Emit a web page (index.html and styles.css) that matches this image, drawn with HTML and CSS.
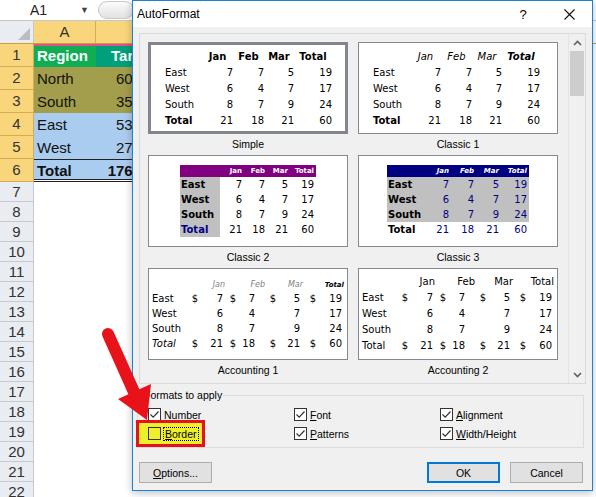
FILE: index.html
```html
<!DOCTYPE html>
<html>
<head>
    <meta charset="UTF-8">
    <title>AutoFormat</title>
    <link rel="stylesheet" href="styles.css">
</head>
<body>
    <!-- worksheet behind the dialog -->
    <div class="sheet">
        <div class="formula-bar">
            <div class="name-box">A1</div>
            <span class="name-drop">&#9660;</span>
            <span class="fx-btn"></span>
        </div>

        <div class="col-heads">
            <div class="corner">
                <svg width="12" height="12" viewBox="0 0 12 12"><polygon points="12,0 12,12 0,12" fill="#b9bec6"/></svg>
            </div>
            <div class="col-head col-a">A</div>
            <div class="col-head col-b">B</div>
        </div>

        <div class="row sel"><div class="rh">1</div><div class="cell a title-a">Region</div><div class="cell b title-b">Target</div></div>
        <div class="row sel olive"><div class="rh">2</div><div class="cell a">North</div><div class="cell b">605</div></div>
        <div class="row sel olive"><div class="rh">3</div><div class="cell a">South</div><div class="cell b">355</div></div>
        <div class="row sel sky"><div class="rh">4</div><div class="cell a">East</div><div class="cell b">530</div></div>
        <div class="row sel sky"><div class="rh">5</div><div class="cell a">West</div><div class="cell b">270</div></div>
        <div class="row sel sky total"><div class="rh">6</div><div class="cell a">Total</div><div class="cell b">1760</div></div>
        <div class="row plain"><div class="rh">7</div></div>
        <div class="row plain"><div class="rh">8</div></div>
        <div class="row plain"><div class="rh">9</div></div>
        <div class="row plain"><div class="rh">10</div></div>
        <div class="row plain"><div class="rh">11</div></div>
        <div class="row plain"><div class="rh">12</div></div>
        <div class="row plain"><div class="rh">13</div></div>
        <div class="row plain"><div class="rh">14</div></div>
        <div class="row plain"><div class="rh">15</div></div>
        <div class="row plain"><div class="rh">16</div></div>
        <div class="row plain"><div class="rh">17</div></div>
        <div class="row plain"><div class="rh">18</div></div>
        <div class="row plain"><div class="rh">19</div></div>
        <div class="row plain"><div class="rh">20</div></div>
        <div class="row plain"><div class="rh">21</div></div>
        <div class="row plain"><div class="rh">22</div></div>
    </div>

    <!-- AutoFormat dialog window -->
    <div class="dialog">
        <div class="titlebar">
            <span class="title">AutoFormat</span>
            <span class="tb-btn">?</span>
            <span class="tb-btn">
                <svg width="11" height="11" viewBox="0 0 11 11"><path d="M0.5 0.5 L10.5 10.5 M10.5 0.5 L0.5 10.5" stroke="#111" stroke-width="1.1"/></svg>
            </span>
        </div>

        <div class="dlg-body">
            <div class="gallery">
                <div class="tiles">
                    <!-- Simple -->
                    <div class="tile">
                        <div class="pv sel">
                            <div class="plain-fmt simple">
                                <div class="r5 hd"><span></span><span>Jan</span><span>Feb</span><span>Mar</span><span>Total</span></div>
                                <div class="r5"><span>East</span><span>7</span><span>7</span><span>5</span><span>19</span></div>
                                <div class="r5"><span>West</span><span>6</span><span>4</span><span>7</span><span>17</span></div>
                                <div class="r5"><span>South</span><span>8</span><span>7</span><span>9</span><span>24</span></div>
                                <div class="r5"><b>Total</b><span>21</span><span>18</span><span>21</span><span>60</span></div>
                            </div>
                        </div>
                        <div class="pv-name">Simple</div>
                    </div>

                    <!-- Classic 1 -->
                    <div class="tile">
                        <div class="pv">
                            <div class="plain-fmt classic1">
                                <div class="r5 hd"><span></span><span>Jan</span><span>Feb</span><span>Mar</span><span>Total</span></div>
                                <div class="r5"><span>East</span><span>7</span><span>7</span><span>5</span><span>19</span></div>
                                <div class="r5"><span>West</span><span>6</span><span>4</span><span>7</span><span>17</span></div>
                                <div class="r5"><span>South</span><span>8</span><span>7</span><span>9</span><span>24</span></div>
                                <div class="r5"><b>Total</b><span>21</span><span>18</span><span>21</span><span>60</span></div>
                            </div>
                        </div>
                        <div class="pv-name">Classic 1</div>
                    </div>

                    <!-- Classic 2 -->
                    <div class="tile">
                        <div class="pv">
                            <div class="c2">
                                <div class="r5 hd"><span></span><span>Jan</span><span>Feb</span><span>Mar</span><span>Total</span></div>
                                <div class="r5"><b>East</b><span>7</span><span>7</span><span>5</span><span>19</span></div>
                                <div class="r5"><b>West</b><span>6</span><span>4</span><span>7</span><span>17</span></div>
                                <div class="r5"><b>South</b><span>8</span><span>7</span><span>9</span><span>24</span></div>
                                <div class="r5"><b class="navy">Total</b><span>21</span><span>18</span><span>21</span><span>60</span></div>
                            </div>
                        </div>
                        <div class="pv-name">Classic 2</div>
                    </div>

                    <!-- Classic 3 -->
                    <div class="tile">
                        <div class="pv">
                            <div class="c3">
                                <div class="r5 hd"><span></span><span>Jan</span><span>Feb</span><span>Mar</span><span>Total</span></div>
                                <div class="r5 shade"><b>East</b><span>7</span><span>7</span><span>5</span><span>19</span></div>
                                <div class="r5 shade"><b>West</b><span>6</span><span>4</span><span>7</span><span>17</span></div>
                                <div class="r5 shade"><b>South</b><span>8</span><span>7</span><span>9</span><span>24</span></div>
                                <div class="r5"><b>Total</b><span>21</span><span>18</span><span>21</span><span>60</span></div>
                            </div>
                        </div>
                        <div class="pv-name">Classic 3</div>
                    </div>

                    <!-- Accounting 1 -->
                    <div class="tile">
                        <div class="pv">
                            <div class="acc acc1">
                                <div class="hd"><span></span><span>Jan</span><span>Feb</span><span>Mar</span><span>Total</span></div>
                                <div class="r9"><span>East</span><span>$</span><span>7</span><span>$</span><span>7</span><span>$</span><span>5</span><span>$</span><span>19</span></div>
                                <div class="r9"><span>West</span><span></span><span>6</span><span></span><span>4</span><span></span><span>7</span><span></span><span>17</span></div>
                                <div class="r9"><span>South</span><span></span><span>8</span><span></span><span>7</span><span></span><span>9</span><span></span><span>24</span></div>
                                <div class="r9"><i>Total</i><span>$</span><span>21</span><span>$</span><span>18</span><span>$</span><span>21</span><span>$</span><span>60</span></div>
                            </div>
                        </div>
                        <div class="pv-name">Accounting 1</div>
                    </div>

                    <!-- Accounting 2 -->
                    <div class="tile">
                        <div class="pv">
                            <div class="acc acc2">
                                <div class="hd"><span></span><span>Jan</span><span>Feb</span><span>Mar</span><span>Total</span></div>
                                <div class="r9"><span>East</span><span>$</span><span>7</span><span>$</span><span>7</span><span>$</span><span>5</span><span>$</span><span>19</span></div>
                                <div class="r9"><span>West</span><span></span><span>6</span><span></span><span>4</span><span></span><span>7</span><span></span><span>17</span></div>
                                <div class="r9"><span>South</span><span></span><span>8</span><span></span><span>7</span><span></span><span>9</span><span></span><span>24</span></div>
                                <div class="r9"><span>Total</span><span>$</span><span>21</span><span>$</span><span>18</span><span>$</span><span>21</span><span>$</span><span>60</span></div>
                            </div>
                        </div>
                        <div class="pv-name">Accounting 2</div>
                    </div>
                </div>

                <div class="vscroll">
                    <div class="sb-arrow">
                        <svg width="9" height="6" viewBox="0 0 9 6"><polyline points="1,5 4.5,1.5 8,5" fill="none" stroke="#606060" stroke-width="1.6"/></svg>
                    </div>
                    <div class="sb-thumb"></div>
                    <div class="sb-track"></div>
                    <div class="sb-arrow">
                        <svg width="9" height="6" viewBox="0 0 9 6"><polyline points="1,1 4.5,4.5 8,1" fill="none" stroke="#606060" stroke-width="1.6"/></svg>
                    </div>
                </div>
            </div>

            <fieldset class="apply">
                <legend>Formats to apply</legend>
                <div class="checks">
                    <label class="chk"><span class="box on"><svg width="11" height="11" viewBox="0 0 11 11"><path d="M1.5 5.5 L4.2 8.2 L9.5 2.5" fill="none" stroke="#333" stroke-width="1.2"/></svg></span><span><u>N</u>umber</span></label>
                    <label class="chk"><span class="box on"><svg width="11" height="11" viewBox="0 0 11 11"><path d="M1.5 5.5 L4.2 8.2 L9.5 2.5" fill="none" stroke="#333" stroke-width="1.2"/></svg></span><span><u>F</u>ont</span></label>
                    <label class="chk"><span class="box on"><svg width="11" height="11" viewBox="0 0 11 11"><path d="M1.5 5.5 L4.2 8.2 L9.5 2.5" fill="none" stroke="#333" stroke-width="1.2"/></svg></span><span><u>A</u>lignment</span></label>
                    <label class="chk marked"><span class="box"></span><span class="focus"><u>B</u>order</span></label>
                    <label class="chk"><span class="box on"><svg width="11" height="11" viewBox="0 0 11 11"><path d="M1.5 5.5 L4.2 8.2 L9.5 2.5" fill="none" stroke="#333" stroke-width="1.2"/></svg></span><span><u>P</u>atterns</span></label>
                    <label class="chk"><span class="box on"><svg width="11" height="11" viewBox="0 0 11 11"><path d="M1.5 5.5 L4.2 8.2 L9.5 2.5" fill="none" stroke="#333" stroke-width="1.2"/></svg></span><span><u>W</u>idth/Height</span></label>
                </div>
            </fieldset>

            <div class="buttons">
                <button class="btn"><u>O</u>ptions...</button>
                <button class="btn ok">OK</button>
                <button class="btn">Cancel</button>
            </div>
        </div>
    </div>

    <!-- red pointer drawn over the dialog -->
    <svg class="pointer" width="596" height="497" viewBox="0 0 596 497">
        <line x1="108" y1="334" x2="134" y2="392" stroke="#e8121b" stroke-width="12" stroke-linecap="round"/>
        <polygon points="147,420 118,399 151,384" fill="#e8121b"/>
    </svg>
</body>
</html>
```

FILE: styles.css
```css
* {
    box-sizing: border-box;
}

body {
    margin: 0;
    width: 596px;
    height: 497px;
    overflow: hidden;
    position: relative;
    background: #fff;
    font-family: "Liberation Sans", Arial, sans-serif;
}

/* ---------- worksheet ---------- */

.formula-bar {
    height: 21px;
    display: flex;
    align-items: center;
    border-bottom: 1px solid #c6c6c6;
}

.name-box {
    width: 78px;
    padding-left: 30px;
    font-size: 14px;
    color: #222;
}

.name-drop {
    font-size: 9px;
    color: #444;
    margin-left: 2px;
}

.fx-btn {
    width: 36px;
    height: 18px;
    margin-left: 9px;
    border: 1px solid #c8c8c8;
    border-radius: 9px;
    background: linear-gradient(#fbfbfb, #e2e2e2);
}

.col-heads {
    display: flex;
    height: 23px;
    border-bottom: 1px solid #c99d45;
}

.corner {
    width: 34px;
    background: #e9ecf0;
    border-right: 1px solid #c5cad2;
    display: flex;
    align-items: flex-end;
    justify-content: flex-end;
    padding: 0 3px 3px 0;
}

.col-head {
    background: #f9d67c;
    border-right: 1px solid #d6ab55;
    text-align: center;
    line-height: 22px;
    font-size: 15px;
    color: #333;
}

.col-a {
    width: 62px;
}

.col-b {
    width: 110px;
}

.row {
    display: flex;
    height: 23px;
}

.rh {
    width: 34px;
    text-align: center;
    font-size: 15px;
    border-right: 1px solid #d6ab55;
    border-bottom: 1px solid #d6ab55;
    background: #f9d67c;
    color: #333;
    line-height: 22px;
}

.row.plain {
    height: 20px;
}

.row.plain .rh {
    background: #e9ecf0;
    border-color: #c5cad2;
    line-height: 19px;
}

.cell {
    font-size: 15px;
    line-height: 23px;
    color: #111;
    padding: 0 3px;
}

.cell.a {
    width: 62px;
}

.cell.b {
    width: 48px;
    text-align: right;
}

.title-a {
    background: #0fae55;
    color: #fff;
    font-weight: bold;
    box-shadow: inset 0 2px 0 #e4508a;
}

.cell.title-b {
    width: 110px;
    text-align: left;
    padding-left: 15px;
    background: #00a07c;
    color: #fff;
    font-weight: bold;
    box-shadow: inset 0 2px 0 #e4508a;
}

.olive .cell {
    background: #a39e4c;
}

.sky .cell {
    background: #aacdef;
}

.total .cell {
    font-weight: bold;
    box-shadow: inset 0 1px 0 #222, inset 0 -1px 0 #222, inset 0 -2px 0 #fff, inset 0 -3px 0 #222;
}

/* ---------- dialog ---------- */

.dialog {
    position: absolute;
    left: 132px;
    top: 0;
    width: 461px;
    height: 491px;
    background: #f0f0f0;
    border: 1px solid #1883d7;
    box-shadow: 0 2px 8px rgba(0, 0, 0, 0.25);
    font-size: 10.5px;
    color: #000;
}

.titlebar {
    height: 26px;
    background: #fff;
    display: flex;
    align-items: center;
    padding-left: 4px;
}

.title {
    flex: 1;
    font-size: 12px;
}

.tb-btn {
    width: 46px;
    text-align: center;
    font-size: 13px;
    display: flex;
    justify-content: center;
}

.dlg-body {
    padding-left: 6px;
}

.gallery {
    display: flex;
    margin-top: 6px;
    width: 447px;
    height: 351px;
    border: 1px solid #dadada;
}

.tiles {
    flex: 1;
    display: grid;
    grid-template-columns: 200px 200px;
    column-gap: 10px;
    align-content: start;
    padding: 8px 0 0 8px;
}

.pv {
    height: 92px;
    background: #fff;
    border: 1px solid #848890;
    font-family: "DejaVu Sans", Verdana, sans-serif;
    font-size: 10px;
    color: #000;
}

.pv.sel {
    border: 3px solid #80858e;
}

.pv-name {
    height: 21px;
    line-height: 21px;
    text-align: center;
}

.pv b {
    font-weight: bold;
}

.pv i {
    font-style: italic;
}

/* Simple / Classic 1 */

.plain-fmt {
    margin: 6px 0 0 14px;
}

.pv.sel .plain-fmt {
    margin-top: 4px;
}

.r5 {
    display: grid;
    grid-template-columns: 37px 31px 31px 30px 38px;
    height: 16px;
    line-height: 16px;
}

.r5 > * {
    text-align: right;
}

.r5 > :first-child {
    text-align: left;
}

.plain-fmt .hd span {
    text-align: center;
}

.simple .hd {
    font-weight: bold;
}

.classic1 .hd {
    font-style: italic;
}

.classic1 .hd span:last-child {
    font-weight: bold;
}

/* Classic 2 */

.c2 {
    margin: 9px 0 0 31px;
    width: 136px;
}

.c2 .r5,
.c3 .r5 {
    height: 15px;
    line-height: 15px;
}

.c2 .r5 {
    grid-template-columns: 40px 24px 23px 23px 26px;
}

.c2 .r5 > *,
.c3 .r5 > * {
    padding-right: 2px;
}

.c2 .r5 > :first-child {
    background: #c0c0c0;
    padding-left: 1px;
}

.c2 .r5.hd,
.c3 .r5.hd {
    height: 12px;
    line-height: 12px;
    font-size: 7px;
    font-weight: bold;
    color: #fff;
}

.c2 .r5.hd {
    background: #800080;
}

.c2 .r5.hd > :first-child {
    background: none;
}

.navy {
    color: #000080;
}

/* Classic 3 */

.c3 {
    margin: 9px 0 0 28px;
    width: 142px;
}

.c3 .r5 {
    grid-template-columns: 38px 26px 25px 25px 28px;
    color: #000080;
}

.c3 .r5 > :first-child {
    color: #000;
    padding-left: 1px;
}

.c3 .r5.hd {
    background: #000080;
    font-style: italic;
}

.c3 .shade {
    background: #c0c0c0;
}

/* Accounting 1 / 2 */

.acc {
    margin: 10px 0 0 3px;
}

.acc .hd {
    display: grid;
    grid-template-columns: 36px 37px 40px 38px 41px;
    height: 12px;
    line-height: 12px;
    text-align: right;
}

.r9 {
    display: grid;
    grid-template-columns: 36px 10px 25px 13px 19px 21px 24px 16px 26px;
    height: 15px;
    line-height: 15px;
    text-align: right;
}

.r9 > :first-child {
    text-align: left;
}

.acc1 .hd {
    font-size: 8px;
    font-style: italic;
    color: #7f7f7f;
}

.acc1 .hd span:last-child {
    font-size: 7px;
    font-weight: bold;
    color: #000;
}

.acc2 {
    margin-top: 5px;
}

.acc2 .hd {
    height: 16px;
    line-height: 16px;
}

.acc2 .r9 {
    height: 16px;
    line-height: 16px;
}

/* scroll bar */

.vscroll {
    width: 17px;
    display: flex;
    flex-direction: column;
    background: #f0f0f0;
    border-left: 1px solid #e4e4e4;
}

.sb-arrow {
    height: 17px;
    display: flex;
    align-items: center;
    justify-content: center;
}

.sb-thumb {
    height: 45px;
    margin: 0 1px;
    background: #cdcdcd;
}

.sb-track {
    flex: 1;
}

/* formats to apply */

.apply {
    margin: 3px 0 0 -2px;
    width: 447px;
    height: 61px;
    border: 1px solid #dcdcdc;
    padding: 0 0 0 5px;
}

.apply legend {
    padding: 0 1px;
    line-height: 16px;
}

.checks {
    display: grid;
    grid-template-columns: 146px 146px 1fr;
    grid-auto-rows: 19px;
    margin: 2px 0 0 5px;
}

.chk {
    display: flex;
    align-items: center;
}

.box {
    width: 13px;
    height: 13px;
    border: 1px solid #333;
    background: #fff;
    margin-right: 3px;
    display: flex;
}

.chk.marked {
    justify-self: start;
    background: #f0f02a;
    border: 3px solid #e5121b;
    margin: -4px -7px -4px -12px;
    padding: 1px 4px 1px 9px;
}

.chk.marked .box {
    background: #f0f02a;
}

.focus {
    outline: 1px dotted #000;
    padding: 0 1px;
}

/* buttons */

.buttons {
    display: flex;
    gap: 10px;
    margin-top: 14px;
    padding-right: 9px;
}

.btn {
    width: 73px;
    height: 21px;
    background: #e1e1e1;
    border: 1px solid #adadad;
    font-family: inherit;
    font-size: 10.5px;
    color: #000;
    padding: 0;
}

.btn.ok {
    margin-left: auto;
    border: 2px solid #0078d7;
}

/* pointer annotation */

.pointer {
    position: absolute;
    left: 0;
    top: 0;
    pointer-events: none;
}
```
